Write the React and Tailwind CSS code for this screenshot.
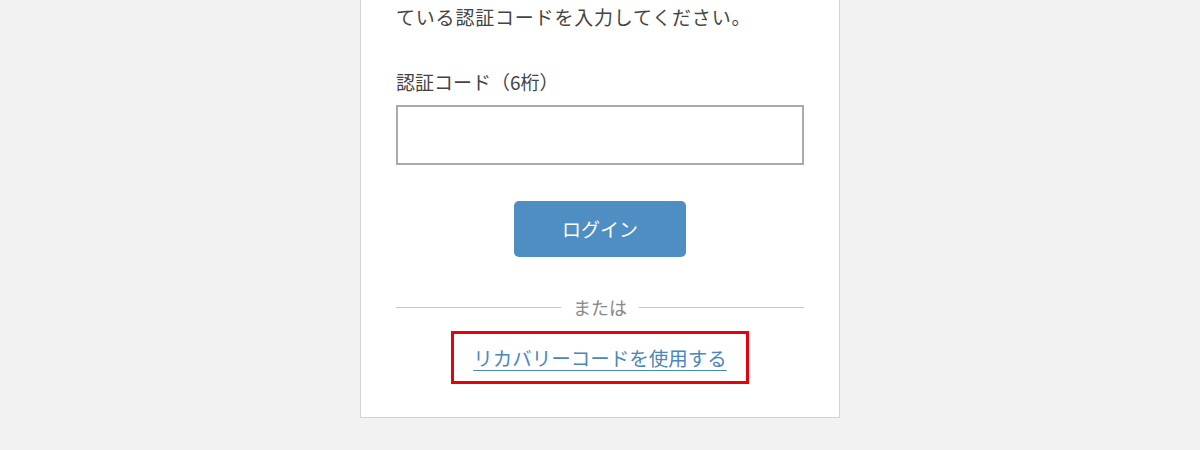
export default function App() {
  const font = { fontFamily: '"Noto Sans CJK JP", "Noto Sans", sans-serif' };
  return (
    <div className="min-h-[450px] w-full bg-[#f2f2f2] flex justify-center" style={font}>
      <div className="w-[480px] h-[418px] bg-white border-x border-b border-[#d4d4d4] px-[35px] flex flex-col">
        <p className="mt-[2px] text-[19px] tracking-[0.8px] leading-[30px] text-[#444]">ている認証コードを入力してください。</p>
        <label className="mt-[35px] text-[19px] leading-[30px] text-[#444]">認証コード（6桁）</label>
        <input
          type="text"
          className="mt-[8px] h-[60px] w-full border-2 border-[#aaaaaa] bg-white outline-none"
        />
        <div className="mt-[36px] flex justify-center">
          <button className="h-[56px] w-[172px] rounded-[5px] bg-[#4f8ec3] text-white text-[19px]">ログイン</button>
        </div>
        <div className="mt-[37px] flex items-center h-[26px]">
          <div className="flex-1 h-px bg-[#c8c8c8]" />
          <span className="px-[12px] text-[18px] leading-[26px] text-[#888]">または</span>
          <div className="flex-1 h-px bg-[#c8c8c8]" />
        </div>
        <div className="mt-[11px] flex justify-center">
          <div className="w-[298px] h-[53px] border-[3px] border-[#e8000b] flex items-center justify-center">
            <a href="#" className="text-[19.5px] leading-[26px] text-[#4a87bb] underline underline-offset-[4px] decoration-1">
              リカバリーコードを使用する
            </a>
          </div>
        </div>
      </div>
    </div>
  );
}
